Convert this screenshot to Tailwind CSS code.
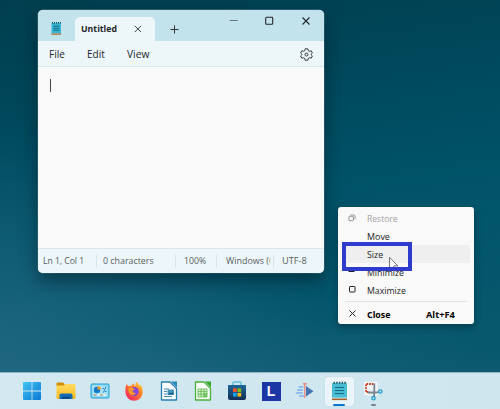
<!DOCTYPE html>
<html lang="en">
<head>
<meta charset="utf-8">
<title>Desktop</title>
<script src="https://cdn.jsdelivr.net/npm/@tailwindcss/browser@4"></script>
</head>
<body class="overflow-hidden">
<div class="relative flex h-[409px] w-[500px] flex-col overflow-hidden bg-[linear-gradient(172deg,#003f4e_0%,#00485c_25%,#005368_50%,#065870_72%,#1f6580_92%)] font-['Open_Sans','Noto_Sans',sans-serif] text-[#1f2629]">
  <div class="absolute inset-0 bg-[radial-gradient(ellipse_at_0%_85%,rgba(48,112,140,.55),transparent_45%),radial-gradient(ellipse_at_100%_85%,rgba(0,84,102,.7),transparent_50%)]"></div>

  <!-- Notepad window -->
  <section class="absolute left-[38px] top-[10px] flex h-[263px] w-[286px] flex-col overflow-hidden rounded-[5px] bg-[#f9f9f9] shadow-[0_8px_18px_rgba(0,20,30,.5),0_0_0_.5px_rgba(100,150,160,.8)]">
    <header class="flex h-[31px] shrink-0 bg-[#c2e2ec]">
      <div class="flex w-[37px] items-end pb-[6px] pl-[13px]">
        <svg class="h-[13px] w-[11px]" viewBox="0 0 11 13"><rect x=".5" y="1" width="9.5" height="10.5" fill="#39b5d6"/><path d="M1 .7h9" stroke="#164f62" stroke-width="1.4" stroke-dasharray="1 1"/><path d="M2.3 4.2h6M2.3 6.2h6M2.3 8.2h6" stroke="#12657f" stroke-width=".9"/><path d="M.5 12.2h9.5" stroke="#b86a2b" stroke-width="1.2"/></svg>
      </div>
      <div class="mt-[7px] flex h-[24px] w-[80px] items-center rounded-t-[5px] bg-[#edf7fa] pl-[6px]">
        <span class="flex w-[53px]"><span class="inline-block origin-left scale-x-[.92] text-[9.500px] font-bold leading-none">Untitled</span></span>
        <svg class="h-[8px] w-[8px]" viewBox="0 0 8 8"><path d="M.8.8l6.2 6.2M7 .8L.8 7" stroke="#333" stroke-width=".9"/></svg>
      </div>
      <div class="mt-[15px] w-[74px] pl-[15px]"><svg class="h-[9px] w-[9px]" viewBox="0 0 9 9"><path d="M4.500.5v8M.5 4.500h8" stroke="#333" stroke-width="1"/></svg></div>
      <div class="mt-[6px] flex h-[10px] items-center">
        <svg class="h-[10px] w-[90px]" viewBox="0 0 90 10" fill="none" stroke="#20292c" stroke-width="1.100"><path d="M.8 4.500h8" stroke="#65777d"/><rect x="36.700" y="1.300" width="7" height="7" rx=".8"/><path d="M73.500 1.500l7 7M80.500 1.500l-7 7"/></svg>
      </div>
    </header>
    <nav class="flex h-[26px] shrink-0 items-center border-b border-[#d5e8ed] bg-[#edf7fa] pl-[10.500px] pt-px text-[11.500px] leading-none">
      <span class="w-[38.500px]"><span class="inline-block origin-left scale-x-[.87]">File</span></span><span class="w-[40px]"><span class="inline-block origin-left scale-x-[.87]">Edit</span></span><span class="inline-block origin-left scale-x-[.89]">View</span>
      <svg class="ml-auto mr-[11px] h-[13px] w-[13px]" viewBox="0 0 24 24" fill="none" stroke="#333" stroke-width="1.800" stroke-linejoin="round"><path d="M9.500 1.500h5l.8 3.500 2 1.100 3.300-1 2.300 4.200-2.500 2.400v.6l2.500 2.400-2.300 4.200-3.300-1-2 1.100-.8 3.500h-5L8.700 19l-2-1.100-3.300 1-2.300-4.200 2.500-2.400v-.6L1.100 9.300l2.300-4.200 3.300 1 2-1.100z"/><circle cx="12" cy="12" r="2.800"/></svg>
    </nav>
    <main class="flex-1 pl-[12px] pt-[12px]"><div class="h-[13px] w-px bg-[#444]"></div></main>
    <footer class="flex h-[25px] shrink-0 items-center border-t border-[#dde7ea] bg-[#edf6fa] pl-[5px] text-[9.500px] leading-none text-[#555e61]">
      <span class="flex w-[53px] whitespace-nowrap"><span class="inline-block origin-left scale-x-[.9]">Ln 1, Col 1</span></span>
      <span class="flex h-[13px] w-[79px] items-center whitespace-nowrap border-l border-[#d9e4e8] pl-[6px]"><span class="inline-block origin-left scale-x-[.93]">0 characters</span></span>
      <span class="flex h-[13px] w-[41px] items-center border-l border-[#d9e4e8] pl-[8px]"><span class="inline-block origin-left scale-x-[.92]">100%</span></span>
      <span class="flex h-[13px] w-[57px] items-center border-l border-[#d9e4e8] pl-[9px]"><span class="inline-block w-[47px] shrink-0 origin-left scale-x-[.94] overflow-hidden whitespace-nowrap py-1">Windows (C</span></span>
      <span class="flex h-[13px] items-center border-l border-[#d9e4e8] pl-[8px]"><span class="inline-block origin-left scale-x-[.97]">UTF-8</span></span>
    </footer>
  </section>

  <!-- Window system menu -->
  <section class="absolute left-[338px] top-[207px] flex h-[117px] w-[136px] flex-col rounded-[3px] bg-[#f9f9f9] pt-[2px] text-[9.500px] leading-none text-[#1c1c1c] shadow-[0_3px_7px_rgba(0,20,30,.4)]">
    <div class="flex h-[18px] items-center text-[#a3a3a3]"><span class="w-[29px] pl-[10px]"><svg class="-mt-px h-[8px] w-[8px]" viewBox="0 0 8 8" fill="none" stroke="#888" stroke-width=".9"><rect x="1" y="2.300" width="4.400" height="4.400" rx=".7"/><path d="M2.500 1h3.200q1.300 0 1.300 1.300v3"/></svg></span><span class="mt-px inline-block origin-left scale-x-[.9]">Restore</span></div>
    <div class="flex h-[18px] items-center pl-[29px]"><span class="mt-px inline-block origin-left scale-x-[.94]">Move</span></div>
    <div class="mx-[4px] flex h-[18px] items-center rounded-[2px] bg-[#efefef] pl-[25px]"><span class="mt-px inline-block origin-left scale-x-[.93]">Size</span></div>
    <div class="flex h-[18px] items-center"><span class="w-[29px] pl-[10px]"><svg class="h-[7px] w-[7px]" viewBox="0 0 7 7"><path d="M.5 2.500h6" stroke="#222"/></svg></span><span class="mt-px inline-block origin-left scale-x-[.92]">Minimize</span></div>
    <div class="flex h-[18px] items-center"><span class="w-[29px] pl-[11px]"><svg class="-mt-px h-[7px] w-[7px]" viewBox="0 0 7 7"><rect x=".5" y=".5" width="5.500" height="5.500" rx=".6" fill="none" stroke="#222"/></svg></span><span class="mt-px inline-block origin-left scale-x-[.92]">Maximize</span></div>
    <div class="mx-[7px] mt-[2px] h-px bg-[#e2e2e2]"></div>
    <div class="mt-[3px] flex h-[18px] items-center font-bold text-black"><span class="w-[29px] pl-[11px]"><svg class="-mt-px h-[7px] w-[7px]" viewBox="0 0 7 7"><path d="M.5.5l6 6M6.500.5l-6 6" stroke="#222"/></svg></span><span class="mt-px flex w-[59px]"><span class="inline-block origin-left scale-x-[.93]">Close</span></span><span class="mt-px inline-block origin-left scale-x-[.97] whitespace-nowrap">Alt+F4</span></div>
  </section>
  <svg class="absolute left-[388px] top-[256px] h-[12px] w-[12px]" viewBox="0 0 12 12"><path d="M1.500 12V1.300l8.300 8.500H6.200L4.500 12" fill="#fafafa" stroke="#555" stroke-width=".8"/></svg>
  <div class="absolute left-[342px] top-[242px] h-[29px] w-[70px] border-4 border-[#2e3bcb]"></div>

  <!-- Taskbar -->
  <footer class="relative mt-auto flex h-[37px] items-center border-t border-[#8fb5c2] bg-[linear-gradient(90deg,#d3e8f0,#cee6ee)] pl-[15px]">
    <div class="flex w-[34.150px] justify-center"><svg class="h-[20px] w-[20px]" viewBox="0 0 20 20"><defs><linearGradient id="w" gradientUnits="userSpaceOnUse" x1="0" y1="0" x2="20" y2="20"><stop stop-color="#45c9f6"/><stop offset="1" stop-color="#0872d0"/></linearGradient></defs><path d="M2 1h7.600v8.600H1V2q0-1 1-1zM10.400 1H18q1 0 1 1v7.600h-8.600zM1 10.400h8.600V19H2q-1 0-1-1zM10.400 10.400H19V18q0 1-1 1h-7.600z" fill="url(#w)"/></svg></div>
    <div class="flex w-[34.150px] justify-center"><svg class="h-[20px] w-[20px]" viewBox="0 0 20 20"><defs><linearGradient id="f" x2="0" y2="1"><stop stop-color="#ffdc62"/><stop offset="1" stop-color="#fbb920"/></linearGradient></defs><path d="M.5 2.500q0-1 1-1h5.800l1.500 2v2H.5z" fill="#cf8d08"/><path d="M.5 4.500h7l1.800-1.500h9q1.200 0 1.200 1.200V17q0 1-1 1h-17q-1 0-1-1z" fill="url(#f)"/><path d="M3.500 18v-3.500q0-2 2-2h9q2 0 2 2V18z" fill="#116cb4"/><path d="M6 18v-1.500q0-1 1-1h6q1 0 1 1V18z" fill="#074c88"/></svg></div>
    <div class="flex w-[34.150px] justify-center"><svg class="h-[20px] w-[20px]" viewBox="0 0 20 20"><rect x="1" y="3" width="18" height="14" rx="1" fill="#7ed5f6" stroke="#279fd0"/><rect x="2.500" y="4.500" width="15" height="11" fill="#a7e4fa"/><circle cx="7" cy="9" r="3.200" fill="#147cc4"/><path d="M7.500 8.500V5A3.500 3.500 0 0 1 11 8.500z" fill="#f79c25"/><path d="M12.500 7.500h1.500M16 5.500l-2.500 6M15 10.500h1.500" stroke="#2783b9"/><path d="M3.500 14h3M10 14h3" stroke="#dc8b3c"/><path d="M7 14h3M13 14h3" stroke="#fff"/></svg></div>
    <div class="flex w-[34.150px] justify-center"><svg class="h-[20px] w-[20px]" viewBox="0 0 20 20"><defs><linearGradient id="x" x1="1" y1="0" x2=".2" y2="1"><stop stop-color="#ffe13a"/><stop offset=".45" stop-color="#ff8125"/><stop offset="1" stop-color="#f22265"/></linearGradient></defs><path d="M2.500 3l2 2.200Q6 4.500 7.500 4.700 8.300 3 10 2.500q0 2 1.500 2.700Q11 2.500 13 .5q.5 2.700 3 4.300l1-.8q2 3 1.800 7A8.700 8.700 0 0 1 1.400 11Q1 6.500 2.500 3z" fill="url(#x)"/><circle cx="10.200" cy="10.500" r="4.600" fill="#8646d6"/><path d="M4.500 7.500q2.500-1.800 5 0l1.500.8-2.500 1.500q.5 2.700 3.500 2.200-1.500 3-5 1.800Q3.500 11.500 4.500 7.500z" fill="#ff972b"/></svg></div>
    <div class="flex w-[34.150px] justify-center"><svg class="h-[20px] w-[20px]" viewBox="0 0 20 20"><path d="M2.500 1H11l6.500 6.500V19h-15z" fill="#fafdff" stroke="#277fae" stroke-width="1.300" stroke-linejoin="round"/><path d="M12 .5h6v6z" fill="#2787b8"/><path d="M5 8h5M5 10.500h3M5 13h3M5 15.500h8" stroke="#4289ad"/><rect x="8.500" y="8.500" width="6.500" height="5.500" fill="#4593b9"/><path d="M9 13.500l2-2 1.200 1 1.500-1.500 1 2.500z" fill="#195f84"/></svg></div>
    <div class="flex w-[34.150px] justify-center"><svg class="h-[20px] w-[20px]" viewBox="0 0 20 20"><path d="M2.500 1H11l6.500 6.500V19h-15z" fill="#fafffa" stroke="#4baf3b" stroke-width="1.300" stroke-linejoin="round"/><path d="M12 .5h6v6z" fill="#38a82b"/><path d="M5 8h9v8H5zM5 10.600h9M5 13.300h9M8 8v8M11 8v8" fill="#dcf4d8" stroke="#62b951" stroke-width=".9"/><path d="M10 12h4v4h-4z" fill="#73c563"/></svg></div>
    <div class="flex w-[34.150px] justify-center"><svg class="h-[20px] w-[20px]" viewBox="0 0 20 20"><defs><linearGradient id="s" x2="0" y2="1"><stop stop-color="#1c6798"/><stop offset="1" stop-color="#142e57"/></linearGradient></defs><path d="M6 5V2q0-1 1-1h6q1 0 1 1v3" fill="none" stroke="#62bed6" stroke-width="1.600"/><path d="M1 4h18v13q0 2-2 2H3q-2 0-2-2z" fill="url(#s)"/><path d="M6 7.300h3.700V11H6z" fill="#f15628"/><path d="M10.500 7.300h3.700V11h-3.700z" fill="#81bb25"/><path d="M6 11.800h3.700v3.700H6z" fill="#13a6ee"/><path d="M10.500 11.800h3.700v3.700h-3.700z" fill="#ffbd19"/></svg></div>
    <div class="flex w-[34.150px] justify-center"><div class="flex h-[19px] w-[19px] items-center justify-center bg-[#1c37a5] font-['Liberation_Sans',sans-serif] text-[14px] font-bold leading-none text-white">L</div></div>
    <div class="flex w-[34.150px] justify-center"><svg class="h-[20px] w-[20px]" viewBox="0 0 20 20"><path d="M3.500 6h5M2 9h6M.8 12h7M4 15h5" stroke="#80b1ee" stroke-width="1.500"/><path d="M11 5l7.500 5.200L11 15.500z" fill="#4575b3"/><path d="M9.800 3v14M7.700 2.800h4.200" stroke="#e78f89" stroke-width="1.500"/></svg></div>
    <div class="relative flex w-[34.150px] justify-center"><div class="flex h-[29px] w-[29px] justify-center rounded-[3px] bg-[#eaf5f9] pt-[4px] shadow-[0_0_1px_#a9bdc5]"><svg class="h-[21px] w-[17px]" viewBox="0 0 17 21"><rect x="1" y="2" width="15" height="15" rx=".8" fill="#48bcd2"/><path d="M2.500 1.800h13" stroke="#205a6a" stroke-width="2" stroke-dasharray="1.500 1.200"/><path d="M4 6.500h9M4 9.500h9M4 12.500h9" stroke="#176b83" stroke-width="1.200"/><path d="M1 17h15" stroke="#c9eaf1"/><path d="M1 18.300h15" stroke="#a9602e" stroke-width="1.600"/></svg></div><span class="absolute bottom-[-.5px] h-[2.500px] w-[12px] rounded-full bg-[#0877ce]"></span></div>
    <div class="relative flex h-[29px] w-[34.150px] items-center justify-center"><svg class="h-[22px] w-[20px]" viewBox="0 0 20 22"><rect x="1" y="1.500" width="14" height="14" rx="1.500" fill="#edf2f5"/><path d="M10.500 4H3v8h3" fill="none" stroke="#c63c22" stroke-width="1.800" stroke-dasharray="1.700 1"/><path d="M11.300 3.500v9L10.800 17M5 12.500h8l4-1" fill="none" stroke="#77858c" stroke-width="1.800"/><g fill="#dff3fb" stroke="#279ed0" stroke-width="1.400"><circle cx="17.300" cy="11.500" r="1.600"/><circle cx="10.500" cy="18.300" r="1.600"/></g></svg><span class="absolute bottom-[-.5px] h-[2.500px] w-[5px] rounded-full bg-[#75848c]"></span></div>
  </footer>
</div>
</body>
</html>
